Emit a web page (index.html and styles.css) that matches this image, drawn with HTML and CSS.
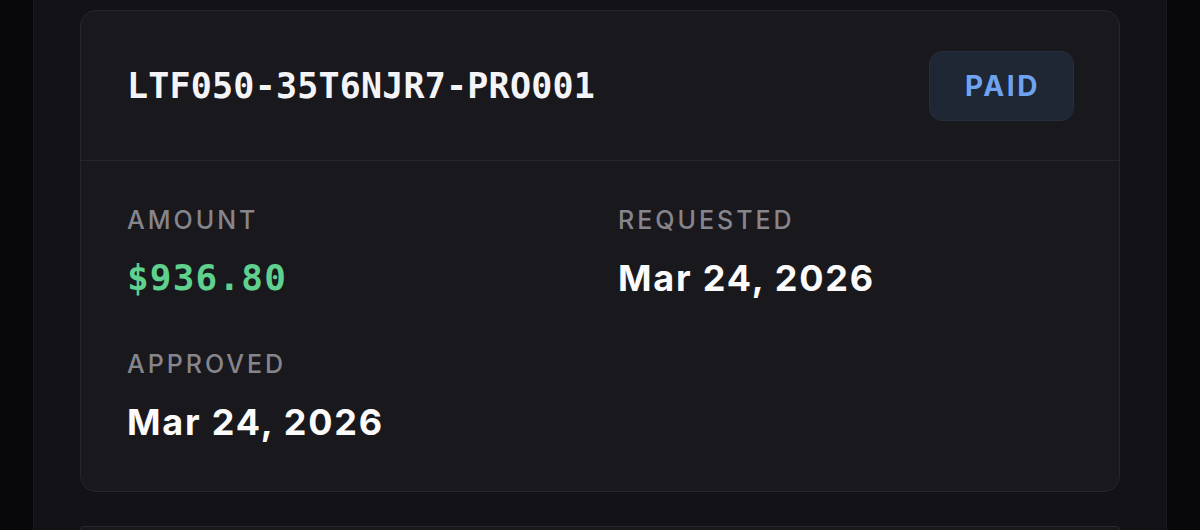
FILE: index.html
```html
<!DOCTYPE html>
<html lang="en">
<head>
<meta charset="utf-8">
<title>Payout</title>
<link rel="stylesheet" href="styles.css">
</head>
<body>
<div class="panel">
  <section class="card">
    <header class="card-head">
      <h2 class="ref">LTF050-35T6NJR7-PRO001</h2>
      <span class="badge">PAID</span>
    </header>
    <div class="card-body">
      <div class="field">
        <div class="label">AMOUNT</div>
        <div class="value money">$936.80</div>
      </div>
      <div class="field">
        <div class="label">REQUESTED</div>
        <div class="value date">Mar 24, 2026</div>
      </div>
      <div class="field">
        <div class="label">APPROVED</div>
        <div class="value date">Mar 24, 2026</div>
      </div>
    </div>
  </section>
  <section class="card card-next"></section>
</div>
</body>
</html>
```
FILE: styles.css
```css
* { box-sizing: border-box; }
html, body { margin: 0; padding: 0; }
body {
  background: #08080a;
  height: 530px;
  overflow: hidden;
  font-family: Inter, "Noto Sans", sans-serif;
  color: #fff;
}
.panel {
  margin: 0 33px;
  height: 530px;
  overflow: hidden;
  background: #131217;
  border-left: 1px solid #1a1a20;
  border-right: 1px solid #1a1a20;
  padding: 10px 46px 0;
  display: flex;
  flex-direction: column;
  gap: 34px;
}
.card {
  background: #19181d;
  border: 1px solid #27262c;
  border-radius: 16px;
  flex-shrink: 0;
}
.card-next {
  flex: 1 1 auto;
  flex-shrink: 1;
  min-height: 0;
  border-bottom: none;
  border-radius: 16px 16px 0 0;
}
.card-head {
  display: flex;
  align-items: center;
  justify-content: space-between;
  padding: 40px 45px 39px 46px;
  border-bottom: 1px solid #26262c;
}
.ref {
  margin: 0;
  font-family: "DejaVu Sans Mono", "Liberation Mono", monospace;
  font-weight: 700;
  font-size: 35px;
  letter-spacing: 0.2px;
  line-height: 1.2;
  color: #f4f4f6;
}
.badge {
  display: flex;
  align-items: center;
  justify-content: center;
  width: 145px;
  height: 70px;
  border-radius: 13px;
  background: #1f2634;
  border: 1px solid #262d3b;
  color: #6fa3f0;
  font-weight: 700;
  font-size: 28px;
  letter-spacing: 2.6px;
  padding-left: 2px;
}
.card-body {
  display: grid;
  grid-template-columns: 1fr 1fr;
  column-gap: 36px;
  row-gap: 48px;
  padding: 43px 46px 47px;
}
.label {
  font-size: 25px;
  font-weight: 500;
  letter-spacing: 3px;
  color: #86858c;
  line-height: 32px;
}
.value {
  margin-top: 20px;
  line-height: 44px;
}
.money {
  font-family: "DejaVu Sans Mono", "Liberation Mono", monospace;
  font-weight: 700;
  font-size: 36px;
  letter-spacing: 1.2px;
  color: #5fd08e;
}
.date {
  font-size: 36px;
  font-weight: 700;
  letter-spacing: 1.8px;
  color: #fbfbfc;
}
```
